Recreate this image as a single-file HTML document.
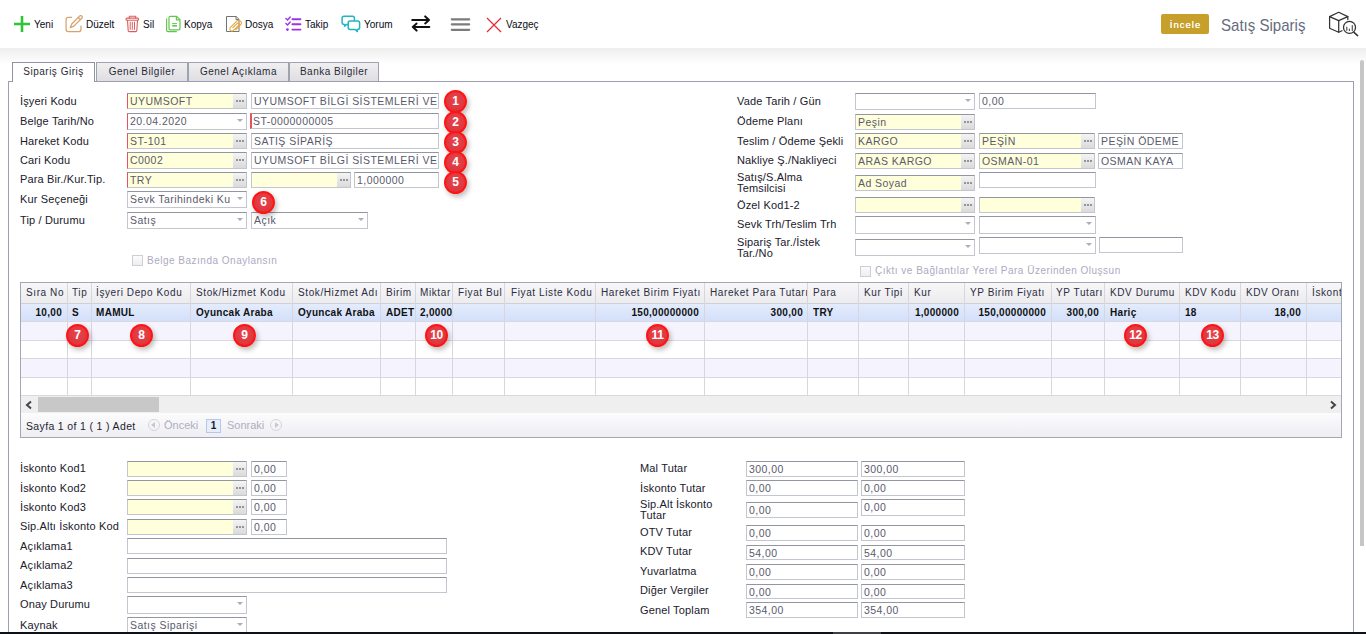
<!DOCTYPE html><html><head><meta charset="utf-8"><title>Satış Sipariş</title><style>
*{box-sizing:border-box}
html,body{margin:0;padding:0}
body{width:1366px;height:634px;position:relative;overflow:hidden;background:#fff;font-family:"Liberation Sans",sans-serif;color:#222}
div,span,i,b{position:absolute}
.lb{font-size:11px;letter-spacing:.15px;line-height:12px;white-space:nowrap;color:#20202c}
.f{border:1px solid #c3c5cf;border-top-color:#93969f;background:#fff;overflow:hidden}
.f.y{background:#ffffdb}
.f.rq{border-left:2px solid #e6525d}
.f.rq1{border-left:1px solid #e6525d}
.f .tx{left:2px;top:1px;font-size:10.5px;letter-spacing:.45px;line-height:13px;white-space:nowrap;color:#5a5a6c}
.f.rq .tx{left:1px}
.bt{right:0;top:0;bottom:0;width:13px;background:linear-gradient(#f4f4f4,#dadada)}
.bt b{width:2px;height:2px;background:#939399;top:6px}
.bt b:nth-child(1){left:3px}.bt b:nth-child(2){left:6px}.bt b:nth-child(3){left:9px}
.ar{right:3px;top:5px;width:0;height:0;border-left:3px solid transparent;border-right:3px solid transparent;border-top:3.5px solid #aeaeb6}
.f.c .tx{right:15px;overflow:hidden}
.f.l .tx{right:15px;overflow:hidden}
.bd{width:23px;height:23px;border-radius:50%;background:radial-gradient(circle at 50% 40%,#e8444a,#d8323a);border:2px solid #ff1414;box-shadow:2px 3px 5px rgba(0,0,0,.25);color:#fff;font-weight:bold;font-size:12px;line-height:19px;text-align:center;letter-spacing:-.3px}
.tab{top:62px;height:19px;border:1px solid #9ea3ae;border-bottom:none;background:linear-gradient(#f0f0f2,#dedee3);font-size:10px;letter-spacing:.5px;line-height:17px;color:#2a2a35;text-align:center;white-space:nowrap}
.tab.on{height:20px;background:#fff;border-color:#8f94a2}
.tt{font-size:10px;line-height:12px;white-space:nowrap;color:#0a0a14}
.gh{top:283px;height:20px;font-size:10px;letter-spacing:.6px;line-height:20px;white-space:nowrap;color:#2c2c42;overflow:hidden}
.gd{top:304px;height:17px;font-size:10px;letter-spacing:.3px;line-height:17px;font-weight:bold;white-space:nowrap;color:#111;overflow:hidden}
.vl{top:283px;width:1px;height:113px;background:#d6d6dc}
.hl{left:21px;width:1320px;height:1px;background:#d8d8de}
.cbx{width:11px;height:11px;border:1px solid #cdced6;background:linear-gradient(#fbfbfc,#eeeef2)}
.dis{font-size:10px;letter-spacing:.5px;line-height:12px;white-space:nowrap;color:#adaabf}
</style></head><body>
<div style="left:0;top:48px;width:1366px;height:16px;background:linear-gradient(#eeeeee,#ffffff)"></div>
<svg style="position:absolute;left:13px;top:15px" width="18" height="18"><path d="M9 1v16M1 9h16" stroke="#30c23a" stroke-width="2.6"/></svg>
<svg style="position:absolute;left:65px;top:15px" width="18" height="18"><g fill="none" stroke="#d7a26c" stroke-width="1.25" stroke-linecap="round" stroke-linejoin="round"><path d="M6.6 2.3H3.2Q1.1 2.3 1.1 4.4V14.6Q1.1 16.6 3.2 16.6H14Q16 16.6 16 14.6V11"/><g transform="translate(11.05 6.8) rotate(45)"><path d="M-1.5 -6.6A1.5 1.5 0 0 1 1.5 -6.6V4.6L0 8.2L-1.5 4.6Z"/><path d="M-1.5 -4.6H1.5"/></g></g></svg>
<svg style="position:absolute;left:124px;top:15px" width="17" height="18"><g fill="none" stroke="#dc5f5f" stroke-width="1.1" stroke-linejoin="round" stroke-linecap="round"><path d="M5.3 3V1.3H11.7V3"/><rect x="2" y="3.1" width="12.6" height="2.1" rx="1"/><path d="M3.5 5.3L4.2 15.6Q4.3 16.6 5.3 16.6H11.7Q12.7 16.6 12.8 15.6L13.5 5.3"/><path d="M6.2 7.2V14.4M8.3 7.2V14.4M10.5 7.2V14.4" stroke-width="1"/></g></svg>
<svg style="position:absolute;left:165px;top:15px" width="17" height="18"><g fill="none" stroke="#62c54e" stroke-width="1.2" stroke-linejoin="round"><path d="M1.6 3.4V15.3Q1.6 16.7 3 16.7H11.8"/><path d="M5.3 1.3H11.6L15 4.7V13.6Q15 14.9 13.7 14.9H5.3Q4 14.9 4 13.6V2.6Q4 1.3 5.3 1.3Z"/><path d="M11.4 1.5V4.9H14.8"/><path d="M7.2 8.6H12" stroke-width="1"/><path d="M7.2 10.8H12" stroke-width="1.6"/></g></svg>
<svg style="position:absolute;left:225px;top:15px" width="17" height="18"><g fill="none" stroke-linejoin="round"><path d="M1.5 1.5H11.2L14 4.3V16.5H1.5Z" stroke="#737373" stroke-width="1"/><path d="M11 1.6V4.5H13.9" stroke="#737373" stroke-width="1"/><g transform="translate(9.4 10.8) rotate(45) scale(.78)" stroke="#e3a63c" stroke-width="1.35" stroke-linecap="round"><path d="M0.3 3.2V-4.3A1.5 1.5 0 0 1 3.3 -4.3V5A2.7 2.7 0 0 1 -2.1 5V-6.3A3.4 3.4 0 0 1 4.7 -6.3V2.5"/></g></g></svg>
<svg style="position:absolute;left:284px;top:15px" width="18" height="18"><g fill="none" stroke="#9b35e8" stroke-width="1.4" stroke-linecap="round"><path d="M1.9 3.4L3.6 5L6.2 2"/><path d="M1.9 8.4L3.6 10L6.2 7"/><path d="M8.4 4.2H16.4M8.4 9.3H16.4M8.4 14.6H16.4" stroke-width="1.9"/></g><circle cx="3.4" cy="14.6" r="1.4" fill="#9b35e8"/></svg>
<svg style="position:absolute;left:341px;top:15px" width="20" height="18"><g fill="none" stroke="#23b4c4" stroke-width="1.5" stroke-linejoin="round"><path d="M3 1.3H11.5Q13.4 1.3 13.4 3.2V7.6Q13.4 9.5 11.5 9.5H5.5L3.6 11.3L3.8 9.5H3Q1.1 9.5 1.1 7.6V3.2Q1.1 1.3 3 1.3Z"/><path d="M9 6H16.8Q18.6 6 18.6 7.9V12.6Q18.6 14.5 16.8 14.5H16.2L16.4 16.6L14.2 14.5H9Q7.2 14.5 7.2 12.6V7.9Q7.2 6 9 6Z" fill="#fff"/></g></svg>
<svg style="position:absolute;left:411px;top:15px" width="20" height="17"><g fill="none" stroke="#111" stroke-width="2" stroke-linecap="round" stroke-linejoin="round"><path d="M1.2 5H18M14.2 1.4L18 5L14.2 8.4"/><path d="M18.3 12H1.8M5.6 8.6L1.8 12L5.6 15.6"/></g></svg>
<svg style="position:absolute;left:450px;top:15px" width="21" height="17"><g stroke="#7b7b7b" stroke-width="2.2" stroke-linecap="round"><path d="M1.8 4.3H19.2M1.8 9.3H19.2M1.8 14.8H19.2"/></g></svg>
<svg style="position:absolute;left:486px;top:17px" width="16" height="16"><path d="M1 1L15 15M15 1L1 15" stroke="#e62a36" stroke-width="1.3"/></svg>
<div class="tt" style="left:34px;top:19px">Yeni</div>
<div class="tt" style="left:86px;top:19px">Düzelt</div>
<div class="tt" style="left:143px;top:19px">Sil</div>
<div class="tt" style="left:184px;top:19px">Kopya</div>
<div class="tt" style="left:245px;top:19px">Dosya</div>
<div class="tt" style="left:305px;top:19px">Takip</div>
<div class="tt" style="left:364px;top:19px">Yorum</div>
<div class="tt" style="left:506px;top:19px">Vazgeç</div>
<div style="left:1161px;top:14px;width:48px;height:20px;background:#c6a02b;border-radius:2px;color:#fff;font-weight:normal;font-size:9.5px;letter-spacing:1px;line-height:21px;text-indent:1px;text-shadow:0 0 .4px #fff;text-align:center">İncele</div>
<div style="left:1221px;top:16px;font-size:17px;line-height:20px;color:#666c7e;white-space:nowrap;transform:scaleX(.885);transform-origin:0 0">Satış Sipariş</div>
<svg style="position:absolute;left:1327px;top:10px" width="34" height="28"><g fill="none" stroke="#333" stroke-width="1.25" stroke-linejoin="round" stroke-linecap="round"><path d="M2.6 6.6L11.7 2.3L20.8 6.6L11.7 10.6Z"/><path d="M2.6 6.6V18.2L11.7 22.2V10.6"/><path d="M20.8 6.6V9.6"/><path d="M11.7 22.2L15 20.7"/><circle cx="22.5" cy="17.4" r="6"/><path d="M27 22.4L30.6 25.6" stroke-width="1.5"/><path d="M19.8 17.2V20.3M22.4 19.2V20.5M25.3 15.6V20.5" stroke="#555" stroke-width="1.2"/></g></svg>

<div style="left:8px;top:81px;width:1346px;height:560px;border:1px solid #9ba0ac;border-bottom:none"></div>
<div class="tab on" style="left:12px;width:83px">Sipariş Giriş</div>
<div class="tab" style="left:96px;width:92px">Genel Bilgiler</div>
<div class="tab" style="left:188px;width:101px">Genel Açıklama</div>
<div class="tab" style="left:289px;width:90px">Banka Bilgiler</div>
<div style="left:1360px;top:60px;width:4px;height:486px;background:#c6c6c6;border-radius:2px 2px 0 0"></div>
<div class="lb" style="left:20px;top:95px">İşyeri Kodu</div>
<div class="f y rq1 l" style="left:127px;top:93px;width:120px;height:16px;"><span class="tx">UYUMSOFT</span><i class="bt"><b></b><b></b><b></b></i></div>
<div class="f" style="left:251px;top:93px;width:188px;height:16px;"><span class="tx">UYUMSOFT BİLGİ SİSTEMLERİ VE</span></div>
<div class="lb" style="left:20px;top:115px">Belge Tarih/No</div>
<div class="f rq1 c" style="left:127px;top:113px;width:120px;height:17px;"><span class="tx">20.04.2020</span><i class="ar"></i></div>
<div class="f rq" style="left:250px;top:113px;width:189px;height:16px;"><span class="tx">ST-0000000005</span></div>
<div class="lb" style="left:20px;top:135px">Hareket Kodu</div>
<div class="f y rq1 l" style="left:127px;top:133px;width:120px;height:16px;"><span class="tx">ST-101</span><i class="bt"><b></b><b></b><b></b></i></div>
<div class="f" style="left:251px;top:133px;width:188px;height:16px;"><span class="tx">SATIŞ SİPARİŞ</span></div>
<div class="lb" style="left:20px;top:154px">Cari Kodu</div>
<div class="f y rq1 l" style="left:127px;top:152px;width:120px;height:17px;"><span class="tx">C0002</span><i class="bt"><b></b><b></b><b></b></i></div>
<div class="f" style="left:251px;top:152px;width:188px;height:17px;"><span class="tx">UYUMSOFT BİLGİ SİSTEMLERİ VE</span></div>
<div class="lb" style="left:20px;top:173px">Para Bir./Kur.Tip.</div>
<div class="f y rq1 l" style="left:127px;top:172px;width:120px;height:16px;"><span class="tx">TRY</span><i class="bt"><b></b><b></b><b></b></i></div>
<div class="f y l" style="left:251px;top:172px;width:100px;height:16px;"><span class="tx"></span><i class="bt"><b></b><b></b><b></b></i></div>
<div class="f" style="left:354px;top:172px;width:85px;height:16px;"><span class="tx">1,000000</span></div>
<div class="lb" style="left:20px;top:193px">Kur Seçeneği</div>
<div class="f c" style="left:127px;top:191px;width:120px;height:17px;"><span class="tx">Sevk Tarihindeki Ku</span><i class="ar"></i></div>
<div class="lb" style="left:20px;top:214px">Tip / Durumu</div>
<div class="f c" style="left:127px;top:212px;width:120px;height:17px;"><span class="tx">Satış</span><i class="ar"></i></div>
<div class="f c" style="left:251px;top:212px;width:117px;height:17px;"><span class="tx">Açık</span><i class="ar"></i></div>
<div class="cbx" style="left:132px;top:255px"></div>
<div class="dis" style="left:147px;top:255px">Belge Bazında Onaylansın</div>
<div class="lb" style="left:737px;top:95px">Vade Tarih / Gün</div>
<div class="f c" style="left:855px;top:93px;width:120px;height:17px;"><span class="tx"></span><i class="ar"></i></div>
<div class="f" style="left:979px;top:93px;width:117px;height:16px;"><span class="tx">0,00</span></div>
<div class="lb" style="left:737px;top:115px">Ödeme Planı</div>
<div class="f y l" style="left:855px;top:114px;width:120px;height:16px;"><span class="tx">Peşin</span><i class="bt"><b></b><b></b><b></b></i></div>
<div class="lb" style="left:737px;top:135px">Teslim / Ödeme Şekli</div>
<div class="f y l" style="left:855px;top:133px;width:120px;height:16px;"><span class="tx">KARGO</span><i class="bt"><b></b><b></b><b></b></i></div>
<div class="f y l" style="left:979px;top:133px;width:116px;height:16px;"><span class="tx">PEŞİN</span><i class="bt"><b></b><b></b><b></b></i></div>
<div class="f" style="left:1098px;top:133px;width:85px;height:16px;"><span class="tx">PEŞİN ÖDEME</span></div>
<div class="lb" style="left:737px;top:154px">Nakliye Ş./Nakliyeci</div>
<div class="f y l" style="left:855px;top:153px;width:120px;height:16px;"><span class="tx">ARAS KARGO</span><i class="bt"><b></b><b></b><b></b></i></div>
<div class="f y l" style="left:979px;top:153px;width:116px;height:16px;"><span class="tx">OSMAN-01</span><i class="bt"><b></b><b></b><b></b></i></div>
<div class="f" style="left:1098px;top:153px;width:85px;height:16px;"><span class="tx">OSMAN KAYA</span></div>
<div class="lb" style="left:737px;top:171px">Satış/S.Alma</div>
<div class="lb" style="left:737px;top:182px">Temsilcisi</div>
<div class="f y l" style="left:855px;top:175px;width:120px;height:16px;"><span class="tx">Ad Soyad</span><i class="bt"><b></b><b></b><b></b></i></div>
<div class="f" style="left:979px;top:172px;width:117px;height:16px;"><span class="tx"></span></div>
<div class="lb" style="left:737px;top:199px">Özel Kod1-2</div>
<div class="f y l" style="left:855px;top:197px;width:120px;height:16px;"><span class="tx"></span><i class="bt"><b></b><b></b><b></b></i></div>
<div class="f y l" style="left:979px;top:197px;width:116px;height:16px;"><span class="tx"></span><i class="bt"><b></b><b></b><b></b></i></div>
<div class="lb" style="left:737px;top:218px">Sevk Trh/Teslim Trh</div>
<div class="f c" style="left:855px;top:216px;width:120px;height:18px;"><span class="tx"></span><i class="ar"></i></div>
<div class="f c" style="left:979px;top:216px;width:117px;height:18px;"><span class="tx"></span><i class="ar"></i></div>
<div class="lb" style="left:737px;top:236px">Sipariş Tar./İstek</div>
<div class="lb" style="left:737px;top:247px">Tar./No</div>
<div class="f c" style="left:855px;top:239px;width:120px;height:17px;"><span class="tx"></span><i class="ar"></i></div>
<div class="f c" style="left:979px;top:237px;width:117px;height:17px;"><span class="tx"></span><i class="ar"></i></div>
<div class="f" style="left:1099px;top:237px;width:84px;height:16px;"><span class="tx"></span></div>
<div class="cbx" style="left:860px;top:266px"></div>
<div class="dis" style="left:875px;top:265px">Çıktı ve Bağlantılar Yerel Para Üzerinden Oluşsun</div>
<div style="left:20px;top:282px;width:1322px;height:156px;border:1px solid #a3a7b3;background:#fff"></div>
<div style="left:21px;top:283px;width:1320px;height:20px;background:linear-gradient(#f7f7f8,#ececee)"></div>
<div class="hl" style="top:303px;background:#cfd0d8"></div>
<div style="left:21px;top:304px;width:1320px;height:17px;background:linear-gradient(#e4ecfc,#d3e0fa)"></div>
<div class="hl" style="top:321px"></div>
<div style="left:21px;top:322px;width:1320px;height:18px;background:#f5f3fd"></div>
<div class="hl" style="top:340px"></div>
<div class="hl" style="top:358px"></div>
<div style="left:21px;top:359px;width:1320px;height:18px;background:#f5f3fd"></div>
<div class="hl" style="top:377px"></div>
<div class="hl" style="top:395px"></div>
<div class="vl" style="left:67px"></div>
<div class="vl" style="left:91px"></div>
<div class="vl" style="left:190px"></div>
<div class="vl" style="left:292px"></div>
<div class="vl" style="left:380px"></div>
<div class="vl" style="left:415px"></div>
<div class="vl" style="left:452px"></div>
<div class="vl" style="left:504px"></div>
<div class="vl" style="left:595px"></div>
<div class="vl" style="left:704px"></div>
<div class="vl" style="left:807px"></div>
<div class="vl" style="left:858px"></div>
<div class="vl" style="left:908px"></div>
<div class="vl" style="left:964px"></div>
<div class="vl" style="left:1051px"></div>
<div class="vl" style="left:1104px"></div>
<div class="vl" style="left:1179px"></div>
<div class="vl" style="left:1240px"></div>
<div class="vl" style="left:1306px"></div>
<div class="gh" style="left:26px;width:41px">Sıra No</div>
<div class="gh" style="left:72px;width:19px">Tip</div>
<div class="gh" style="left:96px;width:94px">İşyeri Depo Kodu</div>
<div class="gh" style="left:196px;width:96px">Stok/Hizmet Kodu</div>
<div class="gh" style="left:298px;width:82px">Stok/Hizmet Adı</div>
<div class="gh" style="left:386px;width:29px">Birim</div>
<div class="gh" style="left:420px;width:32px">Miktar</div>
<div class="gh" style="left:458px;width:46px">Fiyat Bul</div>
<div class="gh" style="left:511px;width:84px">Fiyat Liste Kodu</div>
<div class="gh" style="left:601px;width:103px">Hareket Birim Fiyatı</div>
<div class="gh" style="left:710px;width:97px">Hareket Para Tutarı</div>
<div class="gh" style="left:813px;width:45px">Para</div>
<div class="gh" style="left:864px;width:44px">Kur Tipi</div>
<div class="gh" style="left:914px;width:50px">Kur</div>
<div class="gh" style="left:970px;width:81px">YP Birim Fiyatı</div>
<div class="gh" style="left:1056px;width:48px">YP Tutarı</div>
<div class="gh" style="left:1110px;width:69px">KDV Durumu</div>
<div class="gh" style="left:1185px;width:55px">KDV Kodu</div>
<div class="gh" style="left:1246px;width:60px">KDV Oranı</div>
<div class="gh" style="left:1312px;width:29px">İskonto Oranı</div>
<div class="gd" style="left:72px;width:19px">S</div>
<div class="gd" style="left:96px;width:94px">MAMUL</div>
<div class="gd" style="left:196px;width:96px">Oyuncak Araba</div>
<div class="gd" style="left:298px;width:82px">Oyuncak Araba</div>
<div class="gd" style="left:386px;width:29px">ADET</div>
<div class="gd" style="left:420px;width:32px">2,0000</div>
<div class="gd" style="left:813px;width:45px">TRY</div>
<div class="gd" style="left:1110px;width:69px">Hariç</div>
<div class="gd" style="left:1185px;width:55px">18</div>
<div class="gd" style="left:-88px;width:150px;text-align:right">10,00</div>
<div class="gd" style="left:549px;width:150px;text-align:right">150,00000000</div>
<div class="gd" style="left:653px;width:150px;text-align:right">300,00</div>
<div class="gd" style="left:809px;width:150px;text-align:right">1,000000</div>
<div class="gd" style="left:896px;width:150px;text-align:right">150,00000000</div>
<div class="gd" style="left:949px;width:150px;text-align:right">300,00</div>
<div class="gd" style="left:1151px;width:150px;text-align:right">18,00</div>
<div style="left:21px;top:396px;width:1320px;height:17px;background:#efefef"></div>
<div style="left:38px;top:397px;width:121px;height:15px;background:#c8c8c8"></div>
<svg style="position:absolute;left:24px;top:400px" width="10" height="10"><path d="M7 1.5L3 5L7 8.5" stroke="#444" stroke-width="2" fill="none"/></svg>
<svg style="position:absolute;left:1328px;top:400px" width="10" height="10"><path d="M3 1.5L7 5L3 8.5" stroke="#444" stroke-width="2" fill="none"/></svg>
<div style="left:21px;top:413px;width:1320px;height:24px;background:linear-gradient(#fcfcfd,#eeeef3)"></div>
<div class="tt" style="left:26px;top:420px;font-size:10.5px;letter-spacing:.35px;color:#1e1e30">Sayfa 1 of 1 ( 1 ) Adet</div>
<div style="left:148px;top:419px;width:12px;height:12px;border:1px solid #d4d4dc;border-radius:50%"></div>
<div style="left:151px;top:422px;width:0;height:0;border-top:3px solid transparent;border-bottom:3px solid transparent;border-right:4px solid #c8c8d0"></div>
<div class="tt" style="left:164px;top:419px;font-size:11px;color:#aeaebf">Önceki</div>
<div style="left:206px;top:419px;width:15px;height:14px;border:1px solid #b6c8e8;background:#e6eefc;font-size:10px;line-height:11px;font-weight:bold;text-align:center;color:#1a1a2a">1</div>
<div class="tt" style="left:227px;top:419px;font-size:11px;color:#aeaebf">Sonraki</div>
<div style="left:270px;top:419px;width:12px;height:12px;border:1px solid #d4d4dc;border-radius:50%"></div>
<div style="left:275px;top:422px;width:0;height:0;border-top:3px solid transparent;border-bottom:3px solid transparent;border-left:4px solid #c8c8d0"></div>
<div class="lb" style="left:20px;top:462px">İskonto Kod1</div>
<div class="f y l" style="left:127px;top:461px;width:120px;height:16px;"><span class="tx"></span><i class="bt"><b></b><b></b><b></b></i></div>
<div class="f" style="left:251px;top:461px;width:36px;height:16px;"><span class="tx">0,00</span></div>
<div class="lb" style="left:20px;top:482px">İskonto Kod2</div>
<div class="f y l" style="left:127px;top:480px;width:120px;height:16px;"><span class="tx"></span><i class="bt"><b></b><b></b><b></b></i></div>
<div class="f" style="left:251px;top:480px;width:36px;height:16px;"><span class="tx">0,00</span></div>
<div class="lb" style="left:20px;top:501px">İskonto Kod3</div>
<div class="f y l" style="left:127px;top:499px;width:120px;height:16px;"><span class="tx"></span><i class="bt"><b></b><b></b><b></b></i></div>
<div class="f" style="left:251px;top:499px;width:36px;height:16px;"><span class="tx">0,00</span></div>
<div class="lb" style="left:20px;top:520px">Sip.Altı İskonto Kod</div>
<div class="f y l" style="left:127px;top:519px;width:120px;height:16px;"><span class="tx"></span><i class="bt"><b></b><b></b><b></b></i></div>
<div class="f" style="left:251px;top:519px;width:36px;height:16px;"><span class="tx">0,00</span></div>
<div class="lb" style="left:20px;top:540px">Açıklama1</div>
<div class="f" style="left:127px;top:538px;width:320px;height:16px;"><span class="tx"></span></div>
<div class="lb" style="left:20px;top:559px">Açıklama2</div>
<div class="f" style="left:127px;top:558px;width:320px;height:16px;"><span class="tx"></span></div>
<div class="lb" style="left:20px;top:579px">Açıklama3</div>
<div class="f" style="left:127px;top:577px;width:320px;height:16px;"><span class="tx"></span></div>
<div class="lb" style="left:20px;top:598px">Onay Durumu</div>
<div class="f c" style="left:127px;top:596px;width:120px;height:18px;"><span class="tx"></span><i class="ar"></i></div>
<div class="lb" style="left:20px;top:619px">Kaynak</div>
<div class="f c" style="left:127px;top:617px;width:120px;height:23px;"><span class="tx">Satış Siparişi</span><i class="ar"></i></div>
<div class="lb" style="left:640px;top:462px">Mal Tutar</div>
<div class="f" style="left:746px;top:461px;width:112px;height:16px;"><span class="tx">300,00</span></div>
<div class="f" style="left:861px;top:461px;width:104px;height:16px;"><span class="tx">300,00</span></div>
<div class="lb" style="left:640px;top:482px">İskonto Tutar</div>
<div class="f" style="left:746px;top:480px;width:112px;height:16px;"><span class="tx">0,00</span></div>
<div class="f" style="left:861px;top:480px;width:104px;height:16px;"><span class="tx">0,00</span></div>
<div class="f" style="left:746px;top:502px;width:112px;height:16px;"><span class="tx">0,00</span></div>
<div class="f" style="left:861px;top:499px;width:104px;height:17px;"><span class="tx">0,00</span></div>
<div class="lb" style="left:640px;top:526px">OTV Tutar</div>
<div class="f" style="left:746px;top:525px;width:112px;height:16px;"><span class="tx">0,00</span></div>
<div class="f" style="left:861px;top:525px;width:104px;height:16px;"><span class="tx">0,00</span></div>
<div class="lb" style="left:640px;top:545px">KDV Tutar</div>
<div class="f" style="left:746px;top:545px;width:112px;height:15px;"><span class="tx">54,00</span></div>
<div class="f" style="left:861px;top:545px;width:104px;height:15px;"><span class="tx">54,00</span></div>
<div class="lb" style="left:640px;top:565px">Yuvarlatma</div>
<div class="f" style="left:746px;top:564px;width:112px;height:16px;"><span class="tx">0,00</span></div>
<div class="f" style="left:861px;top:564px;width:104px;height:16px;"><span class="tx">0,00</span></div>
<div class="lb" style="left:640px;top:584px">Diğer Vergiler</div>
<div class="f" style="left:746px;top:584px;width:112px;height:15px;"><span class="tx">0,00</span></div>
<div class="f" style="left:861px;top:584px;width:104px;height:15px;"><span class="tx">0,00</span></div>
<div class="lb" style="left:640px;top:604px">Genel Toplam</div>
<div class="f" style="left:746px;top:602px;width:112px;height:16px;"><span class="tx">354,00</span></div>
<div class="f" style="left:861px;top:602px;width:104px;height:16px;"><span class="tx">354,00</span></div>
<div class="lb" style="left:640px;top:498px">Sip.Alt İskonto</div>
<div class="lb" style="left:640px;top:509px">Tutar</div>
<div class="bd" style="left:444px;top:90px">1</div>
<div class="bd" style="left:444px;top:111px">2</div>
<div class="bd" style="left:444px;top:131px">3</div>
<div class="bd" style="left:444px;top:151px">4</div>
<div class="bd" style="left:444px;top:171px">5</div>
<div class="bd" style="left:252px;top:191px">6</div>
<div class="bd" style="left:66px;top:324px">7</div>
<div class="bd" style="left:130px;top:324px">8</div>
<div class="bd" style="left:233px;top:324px">9</div>
<div class="bd" style="left:425px;top:324px">10</div>
<div class="bd" style="left:646px;top:324px">11</div>
<div class="bd" style="left:1124px;top:324px">12</div>
<div class="bd" style="left:1201px;top:324px">13</div>
<div style="left:0;top:632px;width:1366px;height:2px;background:#0d1117"></div>
<div style="left:833px;top:632px;width:48px;height:2px;background:#3c3f44"></div>
</body></html>
